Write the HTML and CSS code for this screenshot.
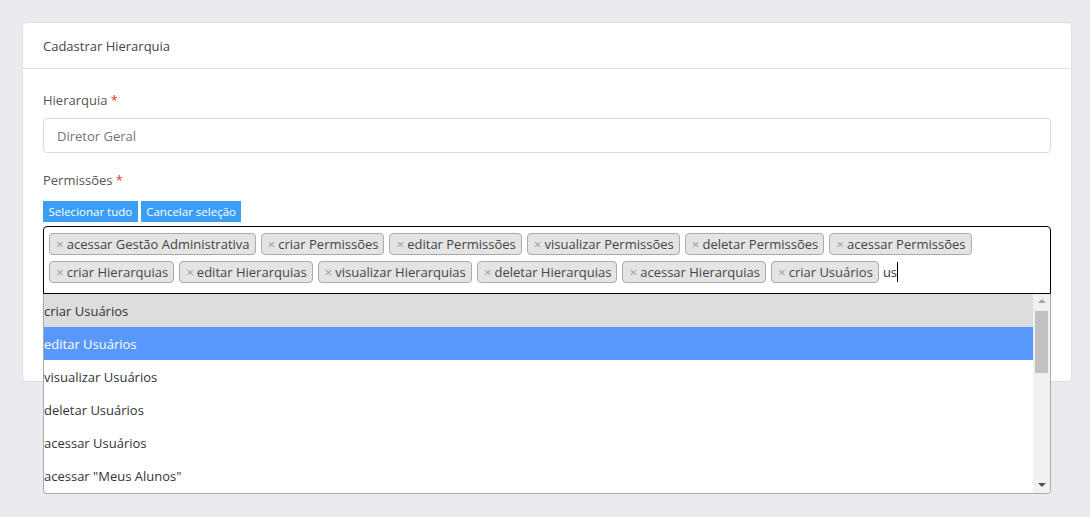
FILE: index.html
```html
<!DOCTYPE html>
<html lang="pt-BR">
<head>
<meta charset="utf-8">
<title>Cadastrar Hierarquia</title>
<link rel="stylesheet" href="styles.css">
</head>
<body>
<div class="page">
  <div class="card">
    <div class="card-header">Cadastrar Hierarquia</div>
    <div class="card-body">
      <div class="form-group">
        <label class="label">Hierarquia <span class="req">*</span></label>
        <div class="input">Diretor Geral</div>
      </div>
      <div class="form-group perms">
        <label class="label">Permissões <span class="req">*</span></label>
        <div class="btns">
          <button class="btn">Selecionar tudo</button>
          <button class="btn">Cancelar seleção</button>
        </div>
        <div class="select">
          <ul class="chips">
            <li class="chip"><span class="x">×</span>acessar Gestão Administrativa</li>
            <li class="chip"><span class="x">×</span>criar Permissões</li>
            <li class="chip"><span class="x">×</span>editar Permissões</li>
            <li class="chip"><span class="x">×</span>visualizar Permissões</li>
            <li class="chip"><span class="x">×</span>deletar Permissões</li>
            <li class="chip"><span class="x">×</span>acessar Permissões</li>
            <li class="chip"><span class="x">×</span>criar Hierarquias</li>
            <li class="chip"><span class="x">×</span>editar Hierarquias</li>
            <li class="chip"><span class="x">×</span>visualizar Hierarquias</li>
            <li class="chip"><span class="x">×</span>deletar Hierarquias</li>
            <li class="chip"><span class="x">×</span>acessar Hierarquias</li>
            <li class="chip"><span class="x">×</span>criar Usuários</li>
            <li class="search">us<span class="caret"></span></li>
          </ul>
          <div class="dropdown">
            <ul class="results">
              <li class="opt selected">criar Usuários</li>
              <li class="opt active">editar Usuários</li>
              <li class="opt">visualizar Usuários</li>
              <li class="opt">deletar Usuários</li>
              <li class="opt">acessar Usuários</li>
              <li class="opt">acessar "Meus Alunos"</li>
            </ul>
            <div class="scrollbar">
              <span class="arrow up"></span>
              <div class="track"><div class="thumb"></div></div>
              <span class="arrow down"></span>
            </div>
          </div>
        </div>
      </div>
    </div>
  </div>
</div>
</body>
</html>
```
FILE: styles.css
```css
* { box-sizing: border-box; }
html, body { margin: 0; padding: 0; }
body {
  background: #e9ebee;
  font-family: "Open Sans", "Noto Sans", sans-serif;
  font-size: 13px;
  color: #495057;
  height: 517px;
  overflow: hidden;
}
.page { padding: 22px 18px 0 22px; }
.card {
  background: #fff;
  border: 1px solid #dcdfe3;
  border-radius: 4px;
  height: 360px;
}
.card-header {
  height: 46px;
  padding: 0 20px;
  display: flex;
  align-items: center;
  border-bottom: 1px solid #dcdfe3;
  color: #444;
}
.card-body { padding: 21px 20px 0 20px; }
.label {
  display: block;
  line-height: 21px;
  margin-bottom: 7px;
  color: #555;
}
.req { color: #e3342f; }
.input {
  height: 35px;
  border: 1px solid #d6dadf;
  border-radius: 4px;
  padding: 0 13px;
  display: flex;
  align-items: center;
  color: #6c757d;
}
.perms { margin-top: 17px; }
.perms .label { margin-bottom: 10px; }
.btns { display: flex; gap: 3px; margin-bottom: 4px; }
.btn {
  font-family: inherit;
  font-size: 11.5px;
  height: 21px;
  padding: 0 5.5px;
  border: 0;
  border-radius: 0;
  background: #3b9ef5;
  color: #fff;
  line-height: 21px;
}
.select { position: relative; }
.chips {
  list-style: none;
  margin: 0;
  padding: 6px 5px 10px 5px;
  border: 1px solid #000;
  border-radius: 4px 4px 0 0;
  display: flex;
  flex-wrap: wrap;
  gap: 6px 4px;
  height: 68px;
}
.chip {
  height: 22px;
  line-height: 20px;
  background: #e4e4e4;
  border: 1px solid #aaa;
  border-radius: 4px;
  padding: 0 5px 0 6px;
  color: #444;
  white-space: nowrap;
}
.chip + .chip { margin-left: 1px; }
.chip:nth-child(7) { margin-left: 0; }
.x { color: #999; margin-right: 3px; font-size: 13.5px; }
.search {
  height: 22px;
  line-height: 20px;
  color: #333;
  display: flex;
  align-items: center;
}
.caret {
  display: inline-block;
  width: 1px;
  height: 20px;
  background: #000;
}
.dropdown {
  position: absolute;
  left: 0;
  top: 68px;
  width: 1008px;
  height: 200px;
  background: #fff;
  border: 1px solid #aaa;
  border-top: 0;
  border-radius: 0 0 4px 4px;
  display: flex;
  overflow: hidden;
}
.results {
  list-style: none;
  margin: 0;
  padding: 0;
  flex: 1;
}
.opt {
  height: 33px;
  line-height: 32px;
  padding-top: 1px;
  color: #333;
  white-space: nowrap;
}
.opt.selected { background: #ddd; }
.opt.active { background: #5897fb; color: #fff; }
.scrollbar {
  width: 17px;
  background: #f1f1f1;
  display: flex;
  flex-direction: column;
  align-items: center;
}
.arrow {
  width: 0; height: 0;
  border-left: 4px solid transparent;
  border-right: 4px solid transparent;
  margin: 5px 0;
}
.arrow.up { border-bottom: 4px solid #a3a3a3; margin-top: 5px; }
.arrow.down { border-top: 4px solid #505050; margin-bottom: 6px; }
.track { flex: 1; width: 100%; padding: 3px 2px; }
.thumb { height: 62px; background: #c1c1c1; }
```
